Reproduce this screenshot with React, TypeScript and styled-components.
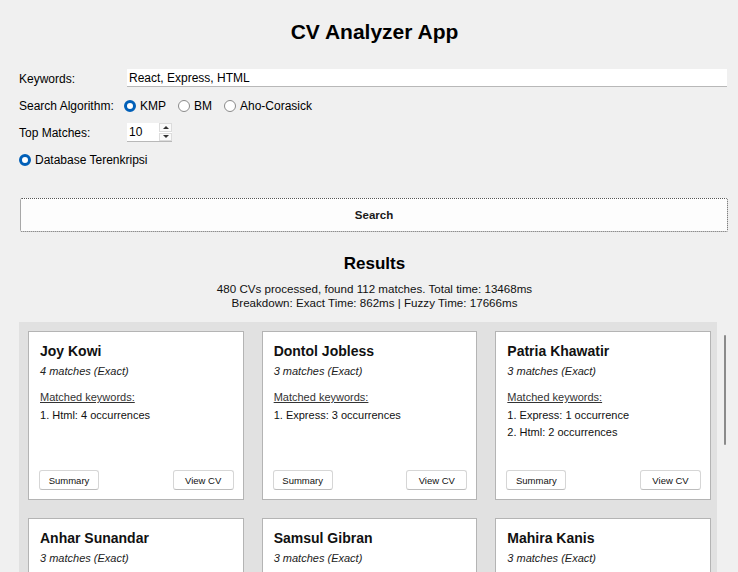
import styled, { createGlobalStyle } from 'styled-components';

const GlobalStyle = createGlobalStyle`
  html, body {
    margin: 0;
    height: 100%;
    overflow: hidden;
    background: #f0f0f0;
  }
  body {
    font-family: "Liberation Sans", Arial, sans-serif;
    color: #000;
  }
`;

const Page = styled.div`
  display: flex;
  flex-direction: column;
  height: 572px;
  box-sizing: border-box;
  padding: 20px 8px 0 19px;
`;

const Title = styled.h1`
  margin: 0;
  font-size: 21px;
  line-height: 24px;
  font-weight: bold;
  text-align: center;
`;

const Form = styled.div`
  display: grid;
  grid-template-columns: 108px 1fr;
  grid-auto-rows: 19px;
  row-gap: 8px;
  margin-top: 25px;
  font-size: 12px;
`;

const Label = styled.div`
  display: flex;
  align-items: center;
`;

const TextInput = styled.div`
  display: flex;
  align-items: center;
  margin-right: 3px;
  padding-left: 2px;
  background: #fff;
  border-bottom: 1px solid #b8b8b8;
  box-sizing: border-box;
  height: 18px;
`;

const RadioGroup = styled.div`
  display: flex;
  align-items: center;
  gap: 12px;
  margin-left: -3px;
`;

const RadioOption = styled.label<{ $full?: boolean }>`
  display: flex;
  align-items: center;
  gap: 4px;
  grid-column: ${(p) => (p.$full ? '1 / -1' : 'auto')};
`;

const RadioDot = styled.span<{ $checked?: boolean }>`
  width: 12px;
  height: 12px;
  box-sizing: border-box;
  border-radius: 50%;
  background: #fff;
  border: ${(p) => (p.$checked ? '3.5px solid #005fb8' : '1px solid #8a8a8a')};
`;

const SpinBox = styled.div`
  display: flex;
  width: 45px;
  height: 19px;
  background: #fff;
  border-bottom: 1px solid #b8b8b8;
  box-sizing: border-box;
`;

const SpinValue = styled.div`
  flex: 1;
  display: flex;
  align-items: center;
  padding-left: 2px;
`;

const SpinButtons = styled.div`
  display: flex;
  flex-direction: column;
  justify-content: center;
  gap: 1px;
  width: 13px;
`;

const SpinArrow = styled.div<{ $down?: boolean }>`
  height: 7px;
  display: flex;
  align-items: center;
  justify-content: center;
  background: #fafafa;
  border: 1px solid #dcdcdc;
  &::after {
    content: '';
    border-left: 3px solid transparent;
    border-right: 3px solid transparent;
    ${(p) => (p.$down ? 'border-top: 3px solid #333;' : 'border-bottom: 3px solid #333;')}
  }
`;

const SearchButton = styled.button`
  margin: 29px 2px 0 1px;
  height: 34px;
  flex-shrink: 0;
  background: #fdfdfd;
  border: 1px dotted #555;
  border-radius: 2px;
  font-family: inherit;
  font-size: 11.5px;
  font-weight: bold;
  color: #1a1a1a;
`;

const ResultsTitle = styled.h2`
  margin: 22px 0 0;
  font-size: 17px;
  line-height: 20px;
  font-weight: bold;
  text-align: center;
`;

const Info = styled.div`
  margin-top: 8px;
  font-size: 11.6px;
  line-height: 14px;
  text-align: center;
  color: #111;
`;

const ScrollArea = styled.div`
  flex: 1;
  min-height: 0;
  overflow: hidden;
  display: flex;
  margin: 12px -8px 0 0;
`;

const Panel = styled.div`
  flex: 1;
  align-self: flex-start;
  background: #e1e1e1;
  padding: 9px 6px 9px 9px;
  display: grid;
  grid-template-columns: repeat(3, 1fr);
  gap: 18px;
`;

const ScrollTrack = styled.div`
  width: 21px;
  padding: 13px 0 0 7px;
  box-sizing: border-box;
`;

const ScrollThumb = styled.div`
  width: 2px;
  height: 110px;
  border-radius: 1px;
  background: #8b8b8b;
`;

const Card = styled.div`
  height: 169px;
  box-sizing: border-box;
  background: #fff;
  border: 1px solid #b4b4b4;
  padding: 10px 9px 9px 11px;
  display: flex;
  flex-direction: column;
`;

const Name = styled.div`
  font-size: 14px;
  line-height: 18px;
  font-weight: bold;
  color: #111;
`;

const MatchCount = styled.div`
  margin-top: 4px;
  font-size: 11px;
  line-height: 14px;
  font-style: italic;
  color: #222;
`;

const KeywordsHeading = styled.div`
  margin-top: 12px;
  margin-bottom: 3px;
  font-size: 11px;
  line-height: 14px;
  text-decoration: underline;
  color: #333;
`;

const KeywordLine = styled.div`
  font-size: 11px;
  line-height: 17px;
  color: #111;
`;

const CardActions = styled.div`
  margin-top: auto;
  margin-left: -1px;
  display: flex;
  justify-content: space-between;
`;

const SmallButton = styled.button<{ $width: number }>`
  width: ${(p) => p.$width}px;
  height: 20px;
  padding: 0;
  background: #fff;
  border: 1px solid #d6d6d6;
  border-bottom-color: #bdbdbd;
  border-radius: 3px;
  font-family: inherit;
  font-size: 9.5px;
  color: #111;
`;

type Result = {
  name: string;
  matches: number;
  keywords: string[];
};

const results: Result[] = [
  { name: 'Joy Kowi', matches: 4, keywords: ['Html: 4 occurrences'] },
  { name: 'Dontol Jobless', matches: 3, keywords: ['Express: 3 occurrences'] },
  { name: 'Patria Khawatir', matches: 3, keywords: ['Express: 1 occurrence', 'Html: 2 occurrences'] },
  { name: 'Anhar Sunandar', matches: 3, keywords: ['Express: 3 occurrences'] },
  { name: 'Samsul Gibran', matches: 3, keywords: ['React: 3 occurrences'] },
  { name: 'Mahira Kanis', matches: 3, keywords: ['Html: 3 occurrences'] },
];

function ResultCard({ result }: { result: Result }) {
  return (
    <Card>
      <Name>{result.name}</Name>
      <MatchCount>{result.matches} matches (Exact)</MatchCount>
      <KeywordsHeading>Matched keywords:</KeywordsHeading>
      {result.keywords.map((k, i) => (
        <KeywordLine key={k}>
          {i + 1}. {k}
        </KeywordLine>
      ))}
      <CardActions>
        <SmallButton $width={60}>Summary</SmallButton>
        <SmallButton $width={61}>View CV</SmallButton>
      </CardActions>
    </Card>
  );
}

export default function App() {
  return (
    <>
      <GlobalStyle />
      <Page>
        <Title>CV Analyzer App</Title>
        <Form>
          <Label>Keywords:</Label>
          <TextInput>React, Express, HTML</TextInput>

          <Label>Search Algorithm:</Label>
          <RadioGroup>
            <RadioOption>
              <RadioDot $checked />
              KMP
            </RadioOption>
            <RadioOption>
              <RadioDot />
              BM
            </RadioOption>
            <RadioOption>
              <RadioDot />
              Aho-Corasick
            </RadioOption>
          </RadioGroup>

          <Label>Top Matches:</Label>
          <SpinBox>
            <SpinValue>10</SpinValue>
            <SpinButtons>
              <SpinArrow />
              <SpinArrow $down />
            </SpinButtons>
          </SpinBox>

          <RadioOption $full>
            <RadioDot $checked />
            Database Terenkripsi
          </RadioOption>
        </Form>

        <SearchButton>Search</SearchButton>

        <ResultsTitle>Results</ResultsTitle>
        <Info>
          480 CVs processed, found 112 matches. Total time: 13468ms
          <br />
          Breakdown: Exact Time: 862ms | Fuzzy Time: 17666ms
        </Info>

        <ScrollArea>
          <Panel>
            {results.map((r) => (
              <ResultCard key={r.name} result={r} />
            ))}
          </Panel>
          <ScrollTrack>
            <ScrollThumb />
          </ScrollTrack>
        </ScrollArea>
      </Page>
    </>
  );
}
